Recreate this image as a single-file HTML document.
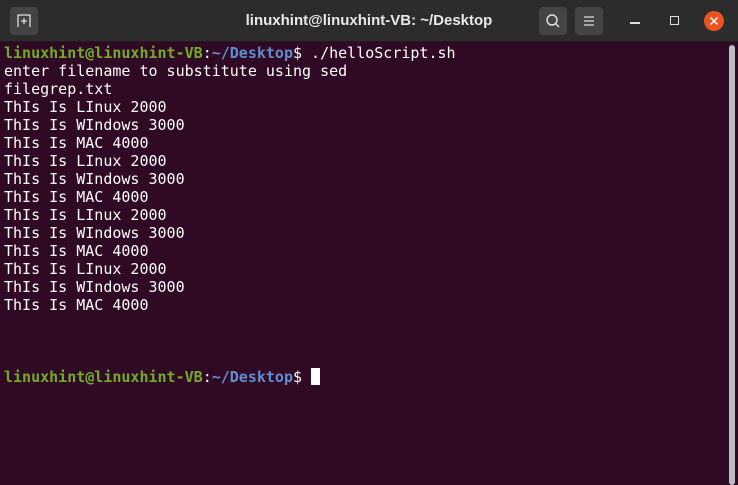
<!DOCTYPE html>
<html><head><meta charset="utf-8"><style>
html,body{margin:0;padding:0;width:738px;height:481px;overflow:hidden;background:#300a24}
.tb{position:absolute;left:0;top:0;width:738px;height:41px;background:#2c2c2c;border-bottom:1px solid #1e1e1e}
.title{position:absolute;left:0;width:738px;top:12px;text-align:center;color:#e8e8e8;font:bold 15px "Liberation Sans",sans-serif}
.btn{position:absolute;top:7px;width:28px;height:28px;background:#444;border-radius:4px}
pre{position:absolute;left:4px;top:44px;margin:0;font:15px/18px "DejaVu Sans Mono","Liberation Mono",monospace;color:#fff}
.g{font-weight:bold;color:#72ac26}
.b{color:#5f8ed0;font-weight:bold}
.cur{display:inline-block;width:9px;height:17px;background:#fff;vertical-align:-3px}
.sb{position:absolute;left:729px;top:45px;width:6px;height:440px;background:#bdbdbd;border-radius:3px}
</style></head><body>
<div class="tb">
<div class="btn" style="left:10px"></div>
<svg style="position:absolute;left:16px;top:13px" width="16" height="16" viewBox="0 0 16 16" fill="none" stroke="#ddd" stroke-width="1.3"><path d="M2 14V2h12v12"/><path d="M8 5v6M5 8h6"/></svg>
<div class="title">linuxhint@linuxhint-VB: ~/Desktop</div>
<div class="btn" style="left:539px"></div>
<svg style="position:absolute;left:545px;top:13px" width="16" height="16" viewBox="0 0 16 16" fill="none" stroke="#ddd" stroke-width="1.5"><circle cx="7" cy="7" r="5"/><path d="M10.5 10.5l3.5 3.5"/></svg>
<div class="btn" style="left:575px"></div>
<svg style="position:absolute;left:581px;top:13px" width="16" height="16" viewBox="0 0 16 16" stroke="#ddd" stroke-width="1.3"><path d="M3 4h10M3 8h10M3 12h10"/></svg>
<div style="position:absolute;left:630px;top:22px;width:10px;height:1.5px;background:#ddd"></div>
<div style="position:absolute;left:670px;top:16px;width:7px;height:7px;border:1.3px solid #ddd"></div>
<div style="position:absolute;left:704px;top:11px;width:20px;height:20px;border-radius:50%;background:#e95420"></div>
<svg style="position:absolute;left:709px;top:16px" width="10" height="10" viewBox="0 0 10 10" stroke="#fff" stroke-width="1.5"><path d="M1.5 1.5l7 7M8.5 1.5l-7 7"/></svg>
</div>
<pre><span class="g">linuxhint@linuxhint-VB</span>:<span class="b">~/Desktop</span>$ ./helloScript.sh
enter filename to substitute using sed
filegrep.txt
ThIs Is LInux 2000
ThIs Is WIndows 3000
ThIs Is MAC 4000
ThIs Is LInux 2000
ThIs Is WIndows 3000
ThIs Is MAC 4000
ThIs Is LInux 2000
ThIs Is WIndows 3000
ThIs Is MAC 4000
ThIs Is LInux 2000
ThIs Is WIndows 3000
ThIs Is MAC 4000



<span class="g">linuxhint@linuxhint-VB</span>:<span class="b">~/Desktop</span>$ <span class="cur"></span></pre>
<div class="sb"></div>
</body></html>
